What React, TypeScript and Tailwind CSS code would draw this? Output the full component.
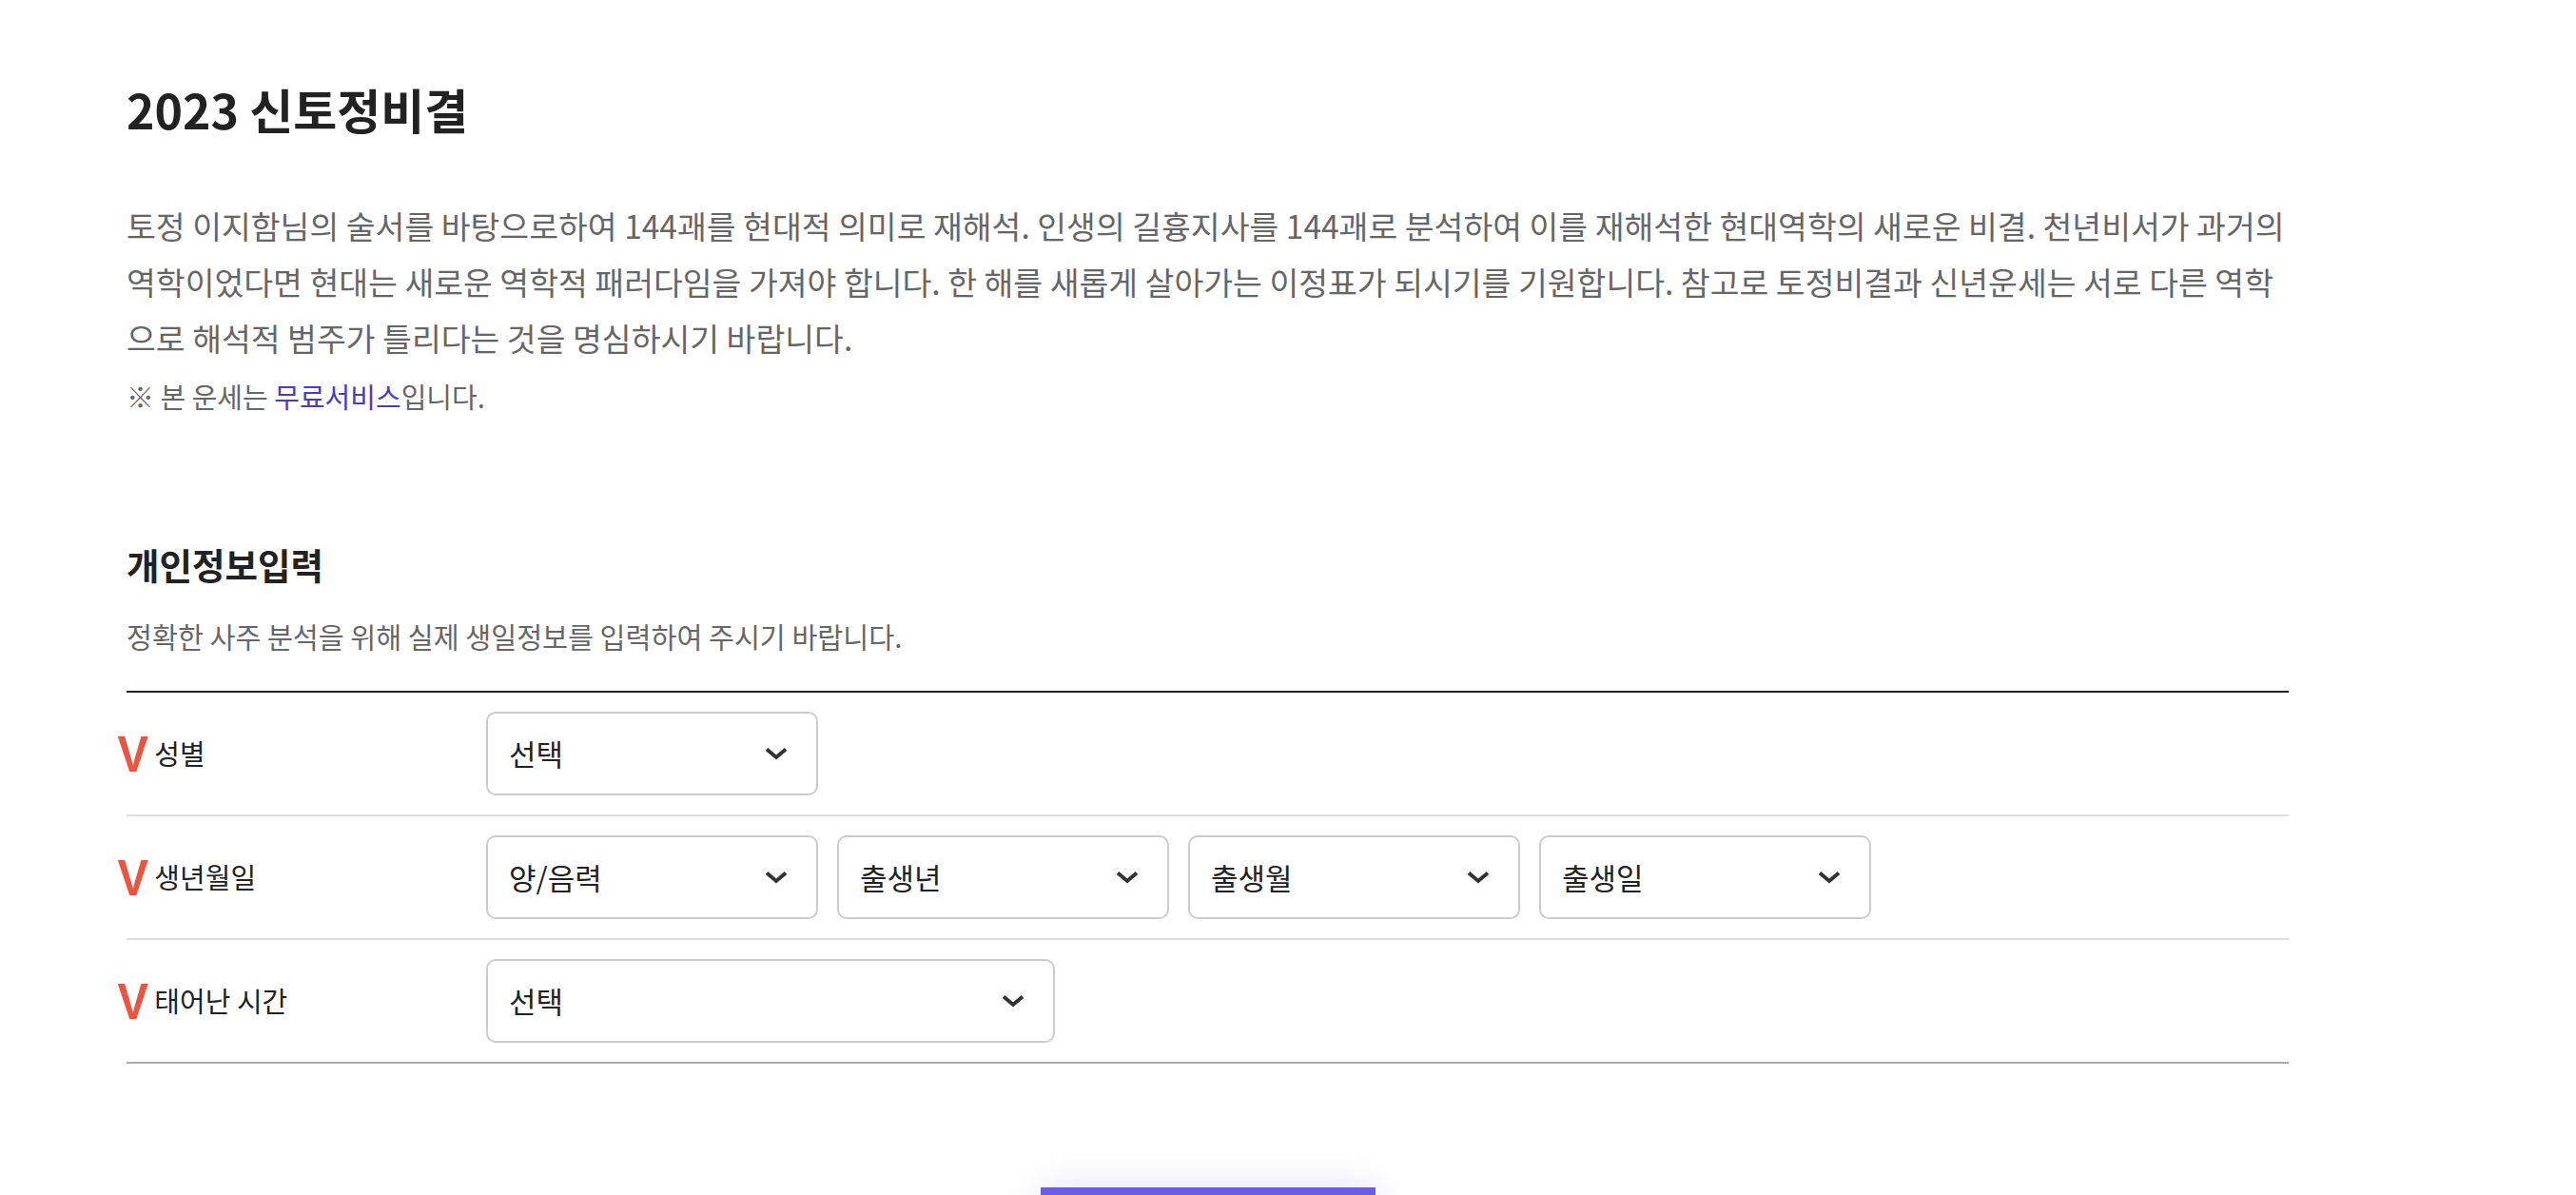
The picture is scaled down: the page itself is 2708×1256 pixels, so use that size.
import React from "react";

const Chevron = () => (
  <svg width="24" height="14" viewBox="0 0 24 14" fill="none">
    <polyline
      points="2,2.5 12,11 22,2.5"
      stroke="#333"
      strokeWidth="4"
      strokeLinejoin="miter"
    />
  </svg>
);

const Select = ({ text, wide = false }: { text: string; wide?: boolean }) => (
  <div
    className={`flex h-[88px] items-center justify-between rounded-[10px] border-2 border-[#cccccc] bg-white pl-[22px] pr-[30px] ${
      wide ? "w-[598px]" : "w-[349px]"
    }`}
  >
    <span className="text-[31px] text-[#222]">{text}</span>
    <Chevron />
  </div>
);

const Row = ({
  label,
  last = false,
  children,
}: {
  label: string;
  last?: boolean;
  children: React.ReactNode;
}) => (
  <div
    className={`flex items-center py-5 ${
      last ? "border-b-2 border-[#aaaaaa]" : "border-b-2 border-[#dddddd]"
    }`}
  >
    <div className="flex w-[378px] items-center">
      <span
        className="-ml-[11px] mr-[5px] inline-block origin-center scale-x-[0.92] text-[53px] leading-none font-bold text-[#ea5441]"
        style={{ fontFamily: '"Liberation Sans", Arial, sans-serif' }}
      >
        V
      </span>
      <span className="text-[29px] text-[#222]">{label}</span>
    </div>
    <div className="flex gap-[20px]">{children}</div>
  </div>
);

export default function App() {
  return (
    <div
      className="min-h-screen bg-white"
      style={{ fontFamily: '"Noto Sans CJK KR", "Noto Sans", sans-serif' }}
    >
      <div className="ml-[133px] w-[2273px] pt-[84px]">
        <h1 className="text-[50px] leading-[60px] font-bold text-[#222]">2023 신토정비결</h1>
        <p className="mt-[63px] text-[33.5px] leading-[59px] text-[#666]">
          토정 이지함님의 술서를 바탕으로하여 144괘를 현대적 의미로 재해석. 인생의 길흉지사를 144괘로 분석하여 이를
          재해석한 현대역학의 새로운 비결. 천년비서가 과거의 역학이었다면 현대는 새로운 역학적 패러다임을 가져야
          합니다. 한 해를 새롭게 살아가는 이정표가 되시기를 기원합니다. 참고로 토정비결과 신년운세는 서로 다른 역학으로
          해석적 범주가 틀리다는 것을 명심하시기 바랍니다.
        </p>
        <p className="mt-[12px] text-[29px] leading-[40px] text-[#666]">
          ※ 본 운세는 <span className="text-[#4b3bc0]">무료서비스</span>입니다.
        </p>

        <h2 className="mt-[135px] text-[37.5px] leading-[44px] font-bold text-[#222]">개인정보입력</h2>
        <p className="mt-[33px] text-[29.3px] leading-[40px] text-[#666]">
          정확한 사주 분석을 위해 실제 생일정보를 입력하여 주시기 바랍니다.
        </p>

        <div className="mt-[38px] border-t-2 border-[#222]">
          <Row label="성별">
            <Select text="선택" />
          </Row>
          <Row label="생년월일">
            <Select text="양/음력" />
            <Select text="출생년" />
            <Select text="출생월" />
            <Select text="출생일" />
          </Row>
          <Row label="태어난 시간" last>
            <Select text="선택" wide />
          </Row>
        </div>

        <div className="mt-[130px] flex justify-center pb-[60px]">
          <button className="h-[100px] w-[352px] bg-[#6c5ce7] text-[30px] font-bold text-white shadow-[0_0_40px_rgba(108,92,231,0.18)]">
            운세보기
          </button>
        </div>
      </div>
    </div>
  );
}
